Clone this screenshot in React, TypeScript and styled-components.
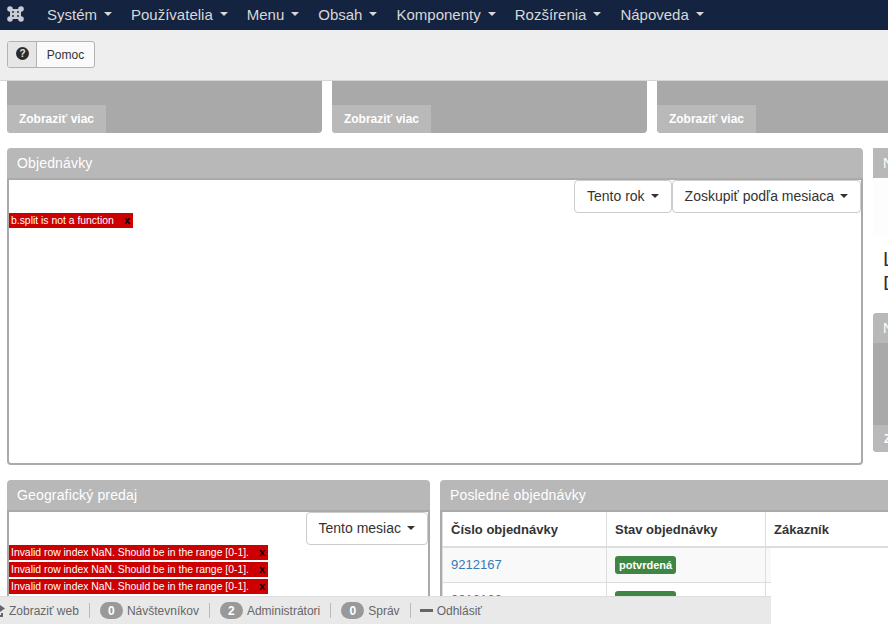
import React from "react";
import styled, { createGlobalStyle } from "styled-components";

const Global = createGlobalStyle`
  html, body { margin: 0; padding: 0; background: #fff; }
  body { font-family: "Liberation Sans", Arial, sans-serif; font-size: 14px; color: #333; }
  * { box-sizing: border-box; }
`;

const Page = styled.div`
  width: 888px;
  height: 624px;
  overflow: hidden;
  position: relative;
`;

const Nav = styled.nav`
  height: 30px;
  background: #132340;
  display: flex;
  align-items: center;
  padding-left: 7px;
`;

const Logo = styled.svg`
  width: 17px;
  height: 16px;
  margin-right: 9px;
  margin-top: -3px;
`;

const NavItem = styled.span`
  color: #d8d8d8;
  font-size: 15px;
  padding: 0 5px 0 14px;
  display: flex;
  align-items: center;
  gap: 7px;
  margin-top: -2px;
`;

const Caret = styled.span<{ $color?: string }>`
  width: 0;
  height: 0;
  border-left: 4px solid transparent;
  border-right: 4px solid transparent;
  border-top: 4px solid ${(p) => p.$color || "#333"};
  display: inline-block;
`;

const Toolbar = styled.div`
  height: 51px;
  background: #eee;
  border-bottom: 1px solid #d5d5d5;
  padding: 11px 7px 0;
`;

const HelpButton = styled.div`
  display: inline-flex;
  height: 27px;
  border: 1px solid #b3b3b3;
  border-radius: 3px;
  background: #fafafa;
  overflow: hidden;
  font-size: 12px;
  align-items: stretch;
`;

const HelpIcon = styled.span`
  width: 29px;
  background: #e6e6e6;
  border-right: 1px solid #b3b3b3;
  display: flex;
  align-items: center;
  justify-content: center;
  padding-bottom: 3px;
`;

const HelpLabel = styled.span`
  width: 57px;
  display: flex;
  align-items: center;
  justify-content: center;
  color: #333;
`;

const Content = styled.div`
  padding-left: 7px;
  width: 1300px;
`;

const StatRow = styled.div`
  display: flex;
  gap: 10px;
  height: 52px;
`;

const StatCard = styled.div`
  width: 315px;
  height: 52px;
  background: #a9a9a9;
  border-radius: 0 0 4px 4px;
  display: flex;
  align-items: flex-end;
  overflow: hidden;
`;

const MoreLink = styled.span`
  width: 99px;
  height: 28px;
  background: #b9b9b9;
  color: #fff;
  font-size: 12px;
  font-weight: bold;
  display: flex;
  align-items: center;
  justify-content: center;
`;

const MainRow = styled.div`
  display: flex;
  gap: 10px;
  margin-top: 15px;
  align-items: flex-start;
`;

const Panel = styled.section<{ $w: number; $h?: number }>`
  width: ${(p) => p.$w}px;
  height: ${(p) => (p.$h ? `${p.$h}px` : "auto")};
  flex-shrink: 0;
  display: flex;
  flex-direction: column;
`;

const PanelHead = styled.header`
  height: 30px;
  background: #b8b8b8;
  border-radius: 4px 4px 0 0;
  color: #fff;
  font-size: 14px;
  letter-spacing: 0.15px;
  padding: 0 10px;
  display: flex;
  align-items: center;
  flex-shrink: 0;
`;

const PanelBody = styled.div`
  flex: 1;
  border: 2px solid #aaa;
  border-radius: 0 0 4px 4px;
  background: #fff;
`;

const Actions = styled.div`
  display: flex;
  justify-content: flex-end;
`;

const Dropdown = styled.span`
  height: 33px;
  background: #fff;
  border: 1px solid #ccc;
  border-radius: 4px;
  padding: 0 12px 1px;
  display: inline-flex;
  align-items: center;
  gap: 6px;
  font-size: 14px;
  color: #333;
`;

const ErrorLine = styled.div<{ $w: number }>`
  width: ${(p) => p.$w}px;
  height: 15px;
  background: #c00;
  color: #fff;
  font-size: 10.4px;
  line-height: 15px;
  padding-left: 2px;
  white-space: nowrap;
  display: flex;
  justify-content: space-between;
  margin-bottom: 2px;
`;

const ErrorClose = styled.span`
  color: #000;
  font-weight: bold;
  font-size: 10.4px;
  margin-right: 3px;
  line-height: 16px;
`;

const SideColumn = styled.div`
  width: 315px;
  flex-shrink: 0;
  display: flex;
  flex-direction: column;
`;

const SideHead = styled.div`
  height: 30px;
  background: #b8b8b8;
  color: #fff;
  font-size: 14px;
  padding-left: 10px;
  display: flex;
  align-items: center;
`;

const SideBlank = styled.div`
  height: 58px;
  margin-bottom: 11px;
  background: #fdfdfd;
`;

const SideText = styled.div`
  height: 24px;
  padding-left: 10px;
  font-size: 20px;
  line-height: 24px;
  color: #333;
`;

const SideCard = styled.div`
  margin-top: 18px;
  border-radius: 4px;
  overflow: hidden;
  height: 139px;
  background: #a9a9a9;
  display: flex;
  flex-direction: column;
  justify-content: space-between;
`;

const SideCardFoot = styled.div`
  height: 27px;
  background: #b9b9b9;
  color: #fff;
  font-size: 12px;
  font-weight: bold;
  padding-left: 11px;
  display: flex;
  align-items: center;
`;

const BottomRow = styled.div`
  display: flex;
  gap: 10px;
  margin-top: 15px;
`;

const TableWrap = styled.div`
  border-left: 2px solid #aaa;
  border-top: 2px solid #aaa;
  background: #fff;
  flex: 1;
`;

const HeadRow = styled.div`
  display: flex;
  height: 36px;
  border-bottom: 2px solid #ddd;
`;

const Th = styled.div<{ $w: number }>`
  width: ${(p) => p.$w}px;
  flex-shrink: 0;
  border-right: 1px solid #ddd;
  border-left: 1px solid #ddd;
  margin-right: -1px;
  padding: 0 8px;
  display: flex;
  align-items: center;
  font-weight: bold;
  font-size: 13px;
  color: #333;
`;

const BodyRow = styled.div<{ $alt?: boolean }>`
  display: flex;
  width: 329px;
  height: 35px;
  background: ${(p) => (p.$alt ? "#f9f9f9" : "#fff")};
  border-bottom: 1px solid #ddd;
`;

const Td = styled.div<{ $w: number }>`
  width: ${(p) => p.$w}px;
  flex-shrink: 0;
  border-right: 1px solid #ddd;
  border-left: 1px solid #ddd;
  margin-right: -1px;
  padding: 0 8px 2px;
  display: flex;
  align-items: center;
  font-size: 13px;
`;

const OrderLink = styled.span`
  color: #337ab7;
`;

const Status = styled.span`
  background: #3f8645;
  color: #fff;
  font-size: 11px;
  font-weight: bold;
  border-radius: 3px;
  padding: 0 4px;
  height: 18px;
  line-height: 18px;
  margin-top: 2px;
`;

const StatusBar = styled.footer`
  position: absolute;
  left: 0;
  bottom: 0;
  width: 771px;
  height: 28px;
  background: #e9e9e9;
  border-top: 1px solid #ddd;
  display: flex;
  align-items: center;
  font-size: 12px;
  color: #666;
`;

const BarItem = styled.span`
  display: inline-flex;
  align-items: center;
  gap: 4px;
  padding: 0 10px;
  height: 15px;
  border-right: 1px solid #bbb;
  &:first-child { padding-left: 0; }
  &:last-child { border-right: 0; margin-left: -1px; }
`;

const Count = styled.span`
  width: 23px;
  height: 17px;
  border-radius: 9px;
  background: #999;
  color: #fff;
  font-weight: bold;
  font-size: 12px;
  display: flex;
  align-items: center;
  justify-content: center;
`;

const Minus = styled.span`
  width: 13px;
  height: 3px;
  background: #666;
  display: inline-block;
`;

const ShareIcon = styled.svg`
  width: 12px;
  height: 12px;
  margin-left: -7px;
`;

const navItems = ["Systém", "Používatelia", "Menu", "Obsah", "Komponenty", "Rozšírenia", "Nápoveda"];

export default function App() {
  return (
    <Page>
      <Global />
      <Nav>
        <Logo viewBox="0 0 17 16">
          <g fill="#c9cdd3">
            <circle cx="3" cy="3" r="2.8" />
            <circle cx="14" cy="3" r="2.8" />
            <circle cx="3" cy="13" r="2.8" />
            <circle cx="14" cy="13" r="2.8" />
            <rect x="3" y="3" width="11" height="10" />
          </g>
          <g fill="#4a566b">
            <rect x="5" y="5" width="2" height="2" />
            <rect x="10" y="5" width="2" height="2" />
            <rect x="5" y="9" width="2" height="2" />
            <rect x="10" y="9" width="2" height="2" />
          </g>
        </Logo>
        {navItems.map((n) => (
          <NavItem key={n}>
            {n}
            <Caret $color="#d8d8d8" />
          </NavItem>
        ))}
      </Nav>
      <Toolbar>
        <HelpButton>
          <HelpIcon>
            <svg width="13" height="13" viewBox="0 0 13 13">
              <circle cx="6.5" cy="6.5" r="6.5" fill="#2b2b2b" />
              <text x="6.5" y="10" textAnchor="middle" fontSize="10" fontWeight="bold" fill="#e6e6e6" fontFamily="Liberation Sans">?</text>
            </svg>
          </HelpIcon>
          <HelpLabel>Pomoc</HelpLabel>
        </HelpButton>
      </Toolbar>
      <Content>
        <StatRow>
          {[0, 1, 2].map((i) => (
            <StatCard key={i}>
              <MoreLink>Zobraziť viac</MoreLink>
            </StatCard>
          ))}
        </StatRow>
        <MainRow>
          <Panel $w={856} $h={317}>
            <PanelHead>Objednávky</PanelHead>
            <PanelBody>
              <Actions>
                <Dropdown>Tento rok <Caret /></Dropdown>
                <Dropdown>Zoskupiť podľa mesiaca <Caret /></Dropdown>
              </Actions>
              <ErrorLine $w={124}>b.split is not a function<ErrorClose>x</ErrorClose></ErrorLine>
            </PanelBody>
          </Panel>
          <SideColumn>
            <SideHead>Najpredávanejšie</SideHead>
            <SideBlank />
            <SideText>Loading</SideText>
            <SideText>Data</SideText>
            <SideCard>
              <SideHead>Najnovšie</SideHead>
              <SideCardFoot>Zobraziť viac</SideCardFoot>
            </SideCard>
          </SideColumn>
        </MainRow>
        <BottomRow>
          <Panel $w={423} $h={200}>
            <PanelHead>Geografický predaj</PanelHead>
            <PanelBody>
              <Actions>
                <Dropdown>Tento mesiac <Caret /></Dropdown>
              </Actions>
              {[0, 1, 2].map((i) => (
                <ErrorLine key={i} $w={259}>
                  Invalid row index NaN. Should be in the range [0-1].<ErrorClose>x</ErrorClose>
                </ErrorLine>
              ))}
            </PanelBody>
          </Panel>
          <Panel $w={800} $h={200}>
            <PanelHead>Posledné objednávky</PanelHead>
            <TableWrap>
              <HeadRow>
                <Th $w={165}>Číslo objednávky</Th>
                <Th $w={160}>Stav objednávky</Th>
                <Th $w={400}>Zákazník</Th>
              </HeadRow>
              <BodyRow $alt>
                <Td $w={165}><OrderLink>9212167</OrderLink></Td>
                <Td $w={160}><Status>potvrdená</Status></Td>
              </BodyRow>
              <BodyRow>
                <Td $w={165}><OrderLink>9212166</OrderLink></Td>
                <Td $w={160}><Status>potvrdená</Status></Td>
              </BodyRow>
            </TableWrap>
          </Panel>
        </BottomRow>
      </Content>
      <StatusBar>
        <BarItem>
          <ShareIcon viewBox="0 0 12 12">
            <path d="M0 3h7v2H2v5h6V8h2v4H0z M7 0l5 3.500L7 7V5C5 5 4 6 3 8c0-3 1-5 4-5.500z" fill="#666" />
          </ShareIcon>
          Zobraziť web
        </BarItem>
        <BarItem><Count>0</Count>Návštevníkov</BarItem>
        <BarItem><Count>2</Count>Administrátori</BarItem>
        <BarItem><Count>0</Count>Správ</BarItem>
        <BarItem><Minus />Odhlásiť</BarItem>
      </StatusBar>
    </Page>
  );
}
